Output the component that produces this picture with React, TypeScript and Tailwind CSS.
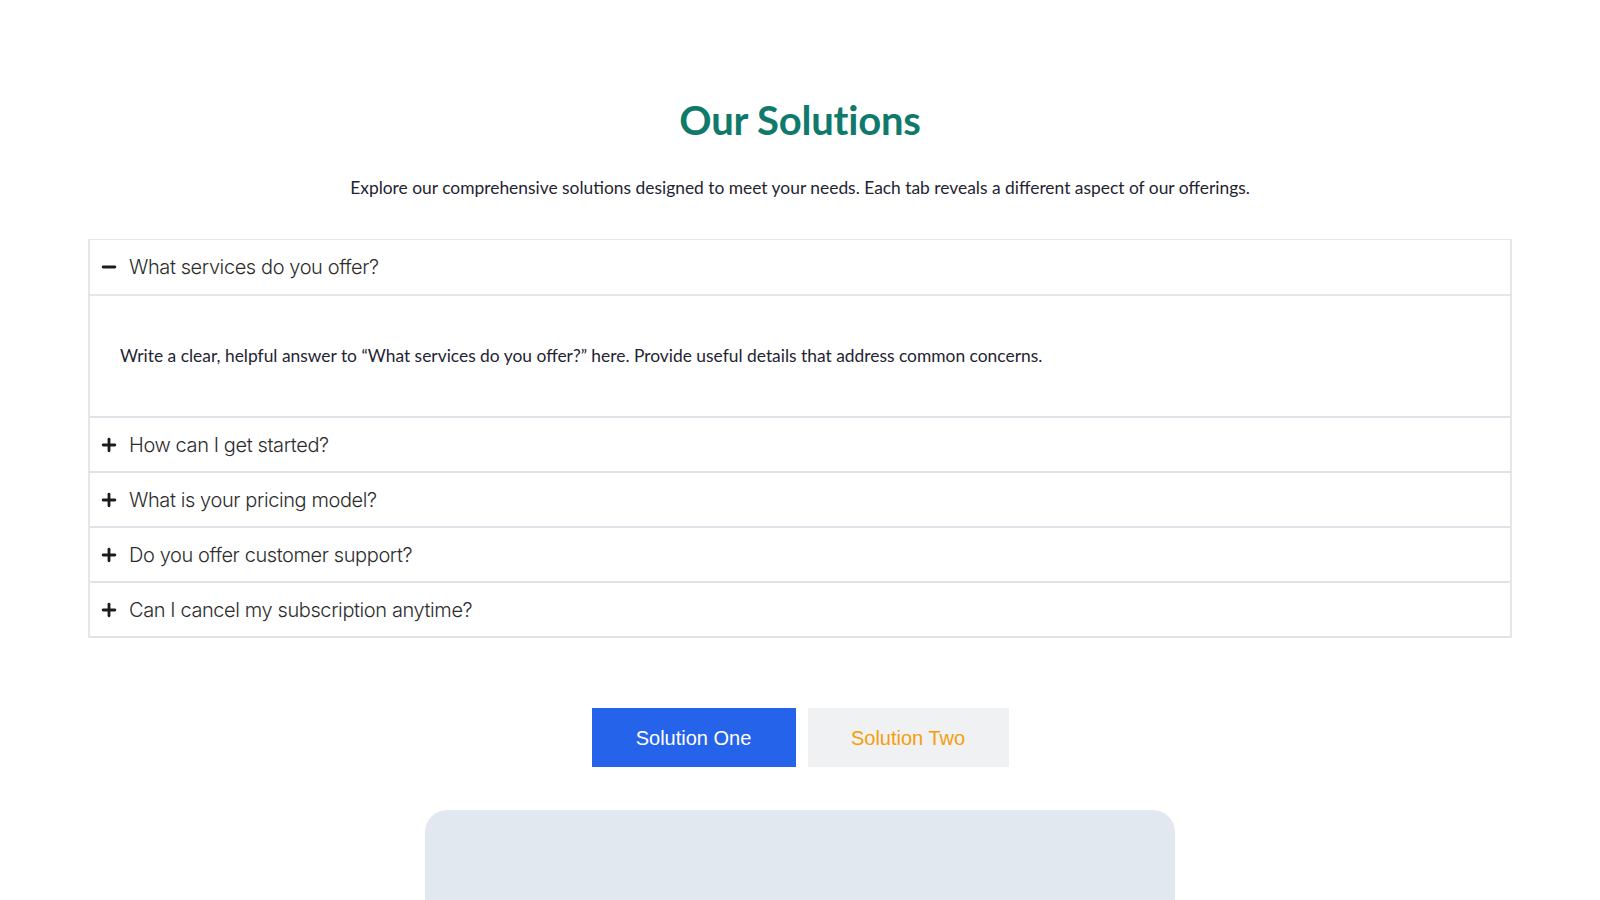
import { Minus, Plus } from "lucide-react";

const faqs = [
  "What services do you offer?",
  "How can I get started?",
  "What is your pricing model?",
  "Do you offer customer support?",
  "Can I cancel my subscription anytime?",
];

export default function App() {
  return (
    <div className="min-h-screen bg-white font-['Lato',sans-serif] overflow-hidden">
      <div className="w-full h-[900px] flex flex-col items-center pt-[95px]">
        {/* Heading */}
        <h1 className="text-[40px] leading-[50px] font-bold text-[#0f7a6c] tracking-[-0.2px]">
          Our Solutions
        </h1>
        <p className="mt-[31px] text-[17.4px] leading-6 text-[#1f2433]">
          Explore our comprehensive solutions designed to meet your needs. Each tab reveals a different aspect of our offerings.
        </p>

        {/* Accordion */}
        <div className="mt-[39px] w-[1424px] border-2 border-[#e4e6e9] border-b-0 border-t">
          {faqs.map((q, i) => (
            <div key={q} className="border-b-2 border-[#dfe2e6]">
              <div className={`${i === 0 ? "h-[54px]" : "h-[53px]"} flex items-center pl-[9px] gap-[10px]`}>
                {i === 0 ? (
                  <Minus size={20} strokeWidth={3.4} className="text-[#1c1c1c]" />
                ) : (
                  <Plus size={20} strokeWidth={3.4} className="text-[#1c1c1c]" />
                )}
                <span className="font-['Inter',sans-serif] font-light text-[20px] text-[#2d2d2d] tracking-[-0.4px]">
                  {q}
                </span>
              </div>
              {i === 0 && (
                <div className="border-t-2 border-[#e4e6e9] h-[122px] flex items-center pl-[30px]">
                  <p className="text-[17.4px] text-[#1f2433]">
                    Write a clear, helpful answer to “What services do you offer?” here. Provide useful details that address common concerns.
                  </p>
                </div>
              )}
            </div>
          ))}
        </div>

        {/* Tabs */}
        <div className="mt-[70px] flex gap-[12px] font-['Liberation_Sans',Arial,sans-serif] text-[20px]">
          <button className="w-[204px] h-[59px] bg-[#2563eb] text-white">Solution One</button>
          <button className="w-[201px] h-[59px] bg-[#f0f1f3] text-[#f59e0b]">Solution Two</button>
        </div>

        {/* Panel */}
        <div className="mt-[43px] w-[750px] h-[200px] bg-[#e2e8f0] rounded-t-[22px]" />
      </div>
    </div>
  );
}
